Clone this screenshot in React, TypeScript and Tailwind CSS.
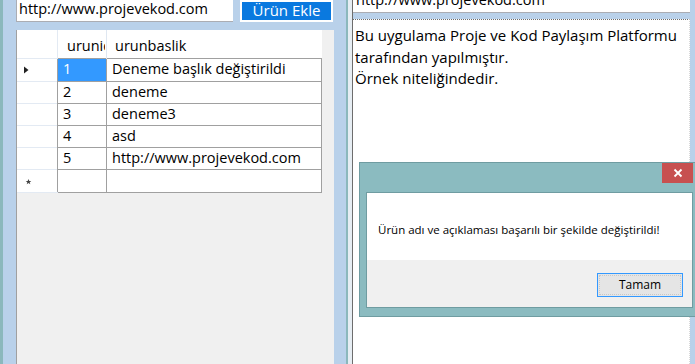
const FONT = "font-['Segoe_UI','Open_Sans','Noto_Sans',sans-serif]";

const ROWS = [
  { id: "1", title: "Deneme başlık değiştirildi" },
  { id: "2", title: "deneme" },
  { id: "3", title: "deneme3" },
  { id: "4", title: "asd" },
  { id: "5", title: "http://www.projevekod.com" },
];

export default function App() {
  return (
    <div className={`relative flex h-[364px] w-[695px] overflow-hidden bg-[#b9d1ea] text-black ${FONT}`}>
      <div className="w-[3px] shrink-0 bg-[#8bb8bc]" />

      {/* left panel */}
      <div className="ml-[13px] flex w-[318px] shrink-0 flex-col">
        <div className="flex h-[22px] items-start">
          <div className="flex h-[22px] w-[217px] items-center border-b border-l border-[#abadb3] bg-white pb-[3px] pl-[2px] text-[14.5px] leading-none">
            http://www.projevekod.com
          </div>
          <div className="ml-[7px] h-[22px] w-[93px] border-2 border-white bg-[#0a79df]">
            <div className="flex h-full items-center justify-center pb-[1px] text-[15px] leading-none text-white">
              Ürün Ekle
            </div>
          </div>
        </div>
        <div className="mt-[8px] flex-1 border-l border-[#a0a0a0] bg-[#f0f0f0]">
          <DataGrid />
        </div>
      </div>

      {/* splitter */}
      <div className="ml-[12px] w-[2px] shrink-0 bg-[#8bb8bc]" />
      <div className="w-[4px] shrink-0 bg-[#e6edf3]" />
      <div className="w-px shrink-0 bg-[#6d6d6d]" />

      {/* right panel */}
      <div className="flex w-[337px] shrink-0 flex-col">
        <div className="relative h-[13px] overflow-hidden border-b border-[#abadb3] bg-white">
          <div className="absolute -top-[10px] left-[3px] text-[14.5px] leading-[20px]">http://www.projevekod.com</div>
        </div>
        <div className="mt-[6px] flex-1 border-t border-r border-[#6d6d6d] border-r-[#d8d8d8] border-dotted border-t-solid bg-white px-[2px] pt-[5px] text-[15px] leading-[21.5px]">
          <p className="whitespace-nowrap">Bu uygulama Proje ve Kod Paylaşım Platformu</p>
          <p>tarafından yapılmıştır.</p>
          <p>Örnek niteliğindedir.</p>
        </div>
      </div>

      <MessageBox />
    </div>
  );
}

function DataGrid() {
  return (
    <table className="border-collapse text-[14.5px] leading-none">
      <colgroup>
        <col className="w-[40px]" />
        <col className="w-[49px]" />
        <col className="w-[215px]" />
      </colgroup>
      <thead>
        <tr className="h-[28px] bg-white">
          <th className="border-r border-[#e3eaf3] p-0" />
          <th className="overflow-hidden border-r border-[#dfe7f1] p-0 text-left font-normal">
            <div className="w-[47px] overflow-hidden whitespace-nowrap pl-[9px] pt-[4px]">urunid</div>
          </th>
          <th className="p-0 text-left font-normal">
            <div className="pl-[8px] pt-[4px]">urunbaslik</div>
          </th>
        </tr>
      </thead>
      <tbody>
        {ROWS.map((r, i) => (
          <tr key={r.id} className="h-[22px]">
            <td className="border-t border-r border-t-[#e3eaf3] border-r-[#a0a0a0] bg-white p-0">
              {i === 0 && (
                <svg width="40" height="22" viewBox="0 0 40 22" className="block">
                  <path d="M7 7.5 L11.5 11 L7 14.5 Z" fill="#222" />
                </svg>
              )}
            </td>
            <td
              className={`border border-[#a0a0a0] p-0 pl-[5px] ${
                i === 0 ? "bg-[#3399ff] text-white" : "bg-white"
              }`}
            >
              {r.id}
            </td>
            <td className="border border-[#a0a0a0] bg-white p-0 pl-[5px]">{r.title}</td>
          </tr>
        ))}
        <tr className="h-[22px]">
          <td className="border-t border-r border-b border-t-[#e3eaf3] border-r-[#a0a0a0] border-b-[#e3eaf3] bg-white p-0">
            <svg width="40" height="22" viewBox="0 0 40 22" className="block">
              <path d="M11.5 9 L12.3 11 L14.3 11 L12.7 12.2 L13.3 14.2 L11.5 13 L9.7 14.2 L10.3 12.2 L8.7 11 L10.7 11 Z" fill="#444" />
            </svg>
          </td>
          <td className="border border-[#a0a0a0] bg-white p-0" />
          <td className="border border-[#a0a0a0] bg-white p-0" />
        </tr>
      </tbody>
    </table>
  );
}

function MessageBox() {
  return (
    <div className="absolute left-[359px] top-[162px] flex h-[155px] w-[341px] flex-col border border-[#6f9ca1] bg-[#8bbbc0] px-[6px] pb-[8px]">
      <div className="h-[29px] shrink-0" />
      <button className="absolute right-[6px] top-0 flex h-[20px] w-[31px] items-center justify-center bg-[#c75050]">
        <svg width="10" height="10" viewBox="0 0 10 10">
          <path d="M1.5 1.5 L8.5 8.5 M8.5 1.5 L1.5 8.5" stroke="white" strokeWidth="1.8" />
        </svg>
      </button>
      <div className="flex flex-1 flex-col border border-[#6f9ca1]">
        <div className="h-[67px] whitespace-nowrap bg-white pl-[11px] pt-[29px] text-[11.5px] leading-[16px]">
          Ürün adı ve açıklaması başarılı bir şekilde değiştirildi!
        </div>
        <div className="flex flex-1 items-start justify-end bg-[#f0f0f0] pr-[9px] pt-[13px]">
          <div className="h-[24px] w-[86px] border border-[#3399ff] bg-[#e5e5e5] p-px">
            <div className="flex h-full items-center justify-center border border-dotted border-[#c8c8c8] text-[12px] leading-none">
              Tamam
            </div>
          </div>
        </div>
      </div>
    </div>
  );
}
